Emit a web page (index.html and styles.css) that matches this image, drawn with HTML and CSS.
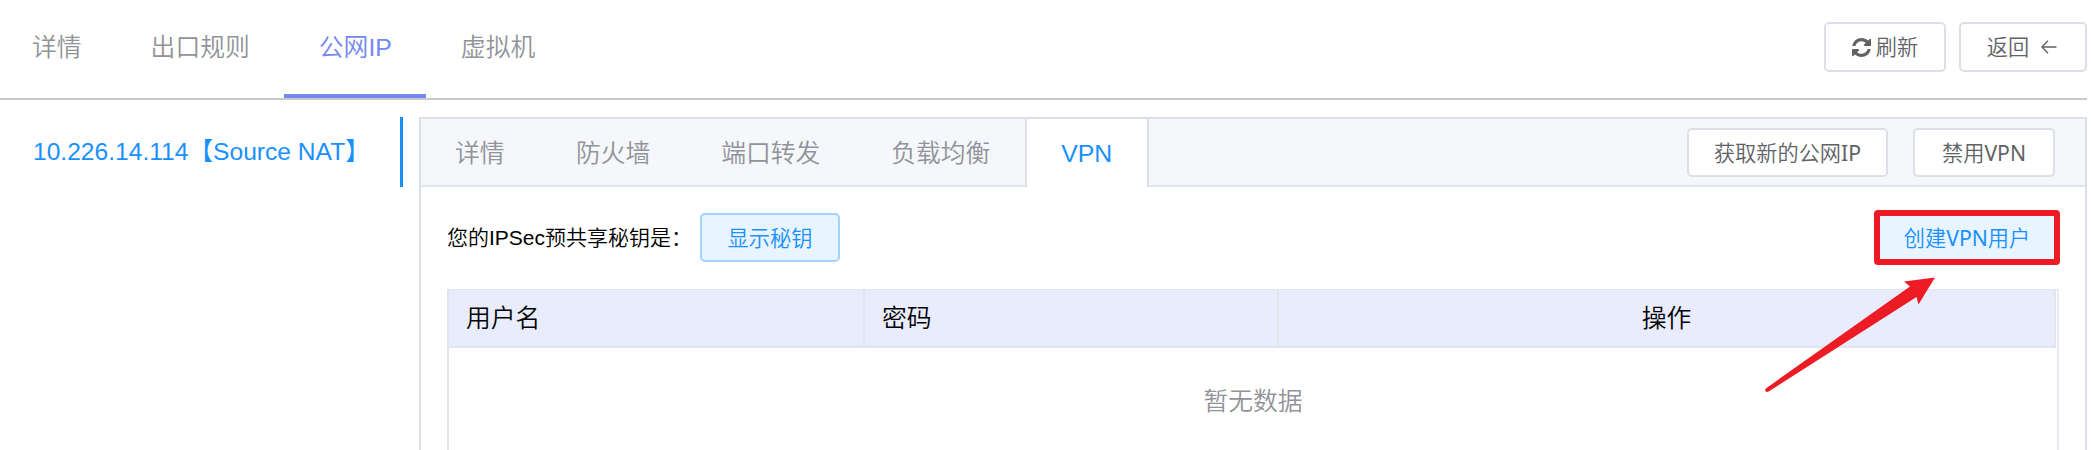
FILE: index.html
```html
<!DOCTYPE html>
<html lang="zh-CN">
<head>
<meta charset="utf-8">
<title>公网IP</title>
<link rel="stylesheet" href="styles.css">
</head>
<body>
<div class="page">
  <header class="topbar">
    <nav class="tabs">
      <a class="tab tab-first">详情</a>
      <a class="tab">出口规则</a>
      <a class="tab tab-active">公网IP</a>
      <a class="tab">虚拟机</a>
    </nav>
    <div class="top-actions">
      <button class="btn btn-refresh"><svg class="icon-refresh" viewBox="0 0 1536 1536"><path fill="currentColor" d="M1511 928q0 5-1 7-64 268-268 434.500t-478 166.500q-146 0-282.500-55t-243.500-157l-129 129q-19 19-45 19t-45-19-19-45v-448q0-26 19-45t45-19h448q26 0 45 19t19 45-19 45l-137 137q71 66 161 102t187 36q134 0 250-65t186-179q11-17 53-117 8-23 30-23h192q13 0 22.500 9.500t9.500 22.500zM1536 128v448q0 26-19 45t-45 19h-448q-26 0-45-19t-19-45 19-45l138-138q-148-137-349-137-134 0-250 65t-186 179q-11 17-53 117-8 23-30 23h-199q-13 0-22.500-9.500t-9.500-22.500v-7q65-268 270-434.500t480-166.500q146 0 284 55.500t245 156.500l130-129q19-19 45-19t45 19 19 45z"/></svg><span>刷新</span></button>
      <button class="btn btn-back"><span>返回</span><svg class="icon-back" viewBox="0 0 16 14"><path d="M15.500 7H1M7 .8L.9 7L7 13.200" fill="none" stroke="currentColor" stroke-width="1.400"/></svg></button>
    </div>
  </header>
  <main class="main">
    <aside class="side"><a class="side-item">10.226.14.114【Source NAT】</a></aside>
    <section class="panel">
      <div class="panel-head">
        <nav class="subtabs">
          <a class="subtab">详情</a>
          <a class="subtab">防火墙</a>
          <a class="subtab">端口转发</a>
          <a class="subtab">负载均衡</a>
          <a class="subtab subtab-active">VPN</a>
        </nav>
        <div class="panel-actions">
          <button class="btn btn-small btn-acquire">获取新的公网<span class="latin">IP</span></button>
          <button class="btn btn-small btn-disable">禁用<span class="latin">VPN</span></button>
        </div>
      </div>
      <div class="panel-body">
        <div class="keyrow">
          <span class="keylabel">您的IPSec预共享秘钥是：</span>
          <button class="btn btn-small btn-plain btn-show">显示秘钥</button>
          <button class="btn btn-create">创建<span class="latin">VPN</span>用户</button>
        </div>
        <div class="table">
          <div class="thead">
            <div class="th">用户名</div>
            <div class="th">密码</div>
            <div class="th th-center">操作</div>
          </div>
          <div class="empty">暂无数据</div>
        </div>
      </div>
    </section>
  </main>
  <svg class="pointer" viewBox="0 0 176 118"><path fill="#ed1c24" d="M171 14L140 18L146 23L2.500 124.500Q0 127 2 128Q3 129 5.500 127.500L152.500 33.500L154.500 41Z" transform="translate(0 -10)"/></svg>
</div>
</body>
</html>
```
FILE: styles.css
```css
* { box-sizing: border-box; }
body {
  margin: 0;
  background: #fff;
  font-family: "Liberation Sans", "Noto Sans CJK SC", sans-serif;
  font-size: 24.8px;
  font-weight: 350;
  color: #000;
}
.page {
  position: relative;
  width: 2091px;
  height: 450px;
  padding-right: 4px;
  overflow: hidden;
  display: flex;
  flex-direction: column;
}
.topbar {
  height: 100px;
  flex: none;
  display: flex;
  justify-content: space-between;
  border-bottom: 2px solid #c9c9c9;
}
.tabs { display: flex; }
.tab {
  padding: 0 34.5px;
  line-height: 96px;
  height: 98px;
  color: #909399;
  white-space: nowrap;
}
.tab-first { padding-left: 32px; }
.tab-active {
  color: #7587f3;
  border-bottom: 4px solid #7587f3;
}
.top-actions {
  display: flex;
  gap: 13px;
  padding-top: 22px;
}
.btn {
  display: flex;
  align-items: center;
  justify-content: center;
  height: 50px;
  padding: 0;
  border: 2px solid #dcdfe6;
  border-radius: 5px;
  background: #fff;
  color: #606266;
  font-family: "Noto Sans", "Noto Sans CJK SC", sans-serif;
  font-size: 21.2px;
  font-weight: 350;
  line-height: 28px;
  white-space: nowrap;
}
.latin { font-weight: 400; }
.btn-refresh { width: 122px; gap: 5px; }
.btn-back { width: 128px; gap: 12px; padding-right: 2px; }
.icon-refresh { width: 19px; height: 19px; }
.icon-back { width: 16px; height: 14px; }
.main {
  flex: 1;
  display: flex;
  padding-top: 17px;
}
.side {
  width: 403px;
  height: 70px;
  flex: none;
  margin-right: 16px;
  padding-left: 33px;
  border-right: 3px solid #1890ff;
}
.side-item {
  color: #1890ff;
  font-size: 24.6px;
  line-height: 69px;
  white-space: nowrap;
}
.panel {
  flex: 1;
  display: flex;
  flex-direction: column;
  border: 2px solid #dcdfe6;
  border-bottom: 0;
}
.panel-head {
  height: 68px;
  flex: none;
  display: flex;
  justify-content: space-between;
  background: #f5f7fa;
}
.subtabs { display: flex; }
.panel-head { box-shadow: inset 0 -2px #dfe4ed; }
.subtab {
  padding: 0 35.4px;
  line-height: 70px;
  height: 68px;
  color: #909399;
}
.subtab:first-child { padding: 0 36px 0 34px; }
.subtab:nth-child(4) { padding-right: 34.8px; }
.subtab-active {
  width: 124px;
  padding: 0 34px;
  background: #fff;
  border: solid #dcdfe6;
  border-width: 0 2px;
  color: #1890ff;
}
.panel-actions {
  display: flex;
  gap: 25px;
  padding: 9px 30px 0 0;
}
.btn-small { height: 49px; }
.btn-acquire { width: 201px; }
.btn-disable { width: 142px; }
.panel-body {
  flex: 1;
  display: flex;
  flex-direction: column;
  padding: 23px 25px 0 26px;
}
.keyrow {
  display: flex;
  align-items: center;
  height: 55px;
}
.keylabel {
  width: 253px;
  font-size: 21px;
  line-height: 28px;
  white-space: nowrap;
}
.btn-plain {
  background: #e8f4ff;
  border-color: #a3d3ff;
  color: #1890ff;
}
.btn-show { width: 140px; }
.btn-create {
  width: 186px;
  height: 55px;
  margin-left: auto;
  border: 6px solid #ed1c24;
  border-radius: 4px;
  background: #e8f4ff;
  color: #1890ff;
}
.table {
  flex: 1;
  margin: 24px 1px 0 0;
  border: 2px solid #e6ebf5;
  border-top: 1px solid #dfe6ec;
  border-left-color: #dfe6ec;
  border-bottom: 0;
}
.thead {
  display: grid;
  grid-template-columns: 416px 414px 777px;
  height: 58px;
}
.th {
  padding-left: 17px;
  line-height: 58px;
  height: 58px;
  background: #e9ecfd;
  border: solid #dfe6ec;
  border-width: 0 2px 2px 0;
}
.th-center { padding: 0; text-align: center; }
.empty {
  padding-top: 34px;
  line-height: 40px;
  text-align: center;
  color: #909399;
}
.pointer {
  position: absolute;
  left: 1764px;
  top: 273px;
  width: 176px;
  height: 119px;
}
```
